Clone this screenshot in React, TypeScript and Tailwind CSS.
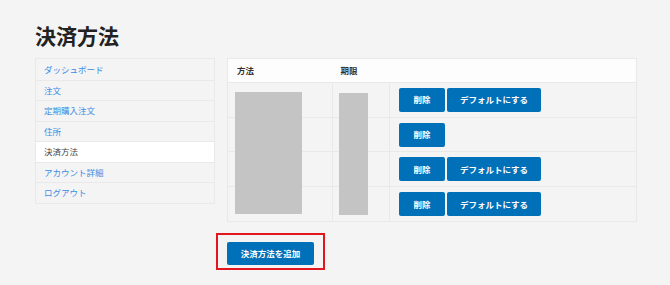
import React from 'react';

const navItems = [
  { label: 'ダッシュボード', active: false },
  { label: '注文', active: false },
  { label: '定期購入注文', active: false },
  { label: '住所', active: false },
  { label: '決済方法', active: true },
  { label: 'アカウント詳細', active: false },
  { label: 'ログアウト', active: false },
];

const rows = [{ canDefault: true }, { canDefault: false }, { canDefault: true }, { canDefault: true }];

function Btn({ children, className = '' }: { children: React.ReactNode; className?: string }) {
  return (
    <button
      className={`h-[24px] rounded-[2px] bg-[#0070b9] text-[8.5px] font-bold text-white ${className}`}
    >
      {children}
    </button>
  );
}

export default function App() {
  return (
    <div
      className="min-h-[285px] w-[670px] bg-[#f4f4f4] pl-[35px] pt-[20px] text-[#333]"
      style={{ fontFamily: '"Noto Sans CJK JP", "Noto Sans", sans-serif' }}
    >
      <h1 className="h-[38px] text-[21px] font-bold leading-[30px] text-[#222]">決済方法</h1>

      <div className="flex gap-[12px]">
        {/* Sidebar */}
        <nav className="w-[180px] self-start border border-[#e9e9e9]">
          {navItems.map((item, i) => (
            <div
              key={item.label}
              className={`flex h-[20.5px] items-center pl-[8px] text-[8.5px] ${
                i > 0 ? 'border-t border-[#e9e9e9]' : ''
              } ${item.active ? 'bg-white text-[#444]' : 'text-[#3b8de4]'}`}
            >
              {item.label}
            </div>
          ))}
        </nav>

        <div className="flex flex-col">
          {/* Table */}
          <div className="relative w-[410px]">
            <table className="w-full border-collapse border border-[#e9e9e9] text-[8.5px]">
              <thead>
                <tr className="h-[24px] bg-[#fdfdfd] text-left font-bold text-[#333]">
                  <th className="w-[105px] pl-[9px] font-bold">方法</th>
                  <th className="w-[57px] pl-[8px] font-bold">期限</th>
                  <th></th>
                </tr>
              </thead>
              <tbody>
                {rows.map((r, i) => (
                  <tr key={i} className="h-[34.7px] border-t border-[#e9e9e9]">
                    <td className="border-r border-[#e9e9e9]"></td>
                    <td className="border-r border-[#e9e9e9]"></td>
                    <td className="pl-[9px]">
                      <div className="flex gap-[2px]">
                        <Btn className="w-[46px]">削除</Btn>
                        {r.canDefault && <Btn className="w-[94px]">デフォルトにする</Btn>}
                      </div>
                    </td>
                  </tr>
                ))}
              </tbody>
            </table>
            <div className="absolute left-[8px] top-[34px] h-[122px] w-[67px] bg-[#c4c4c4]" />
            <div className="absolute left-[112px] top-[35px] h-[122px] w-[29px] bg-[#c4c4c4]" />
          </div>

          {/* Add button */}
          <div className="ml-[-11px] mt-[11px] self-start border-2 border-[#e3161f] px-[9px] py-[3px]">
            <button className="h-[23px] w-[87px] rounded-[2px] bg-[#0070b9] text-[8.5px] font-bold text-white">
              決済方法を追加
            </button>
          </div>
        </div>
      </div>
    </div>
  );
}
